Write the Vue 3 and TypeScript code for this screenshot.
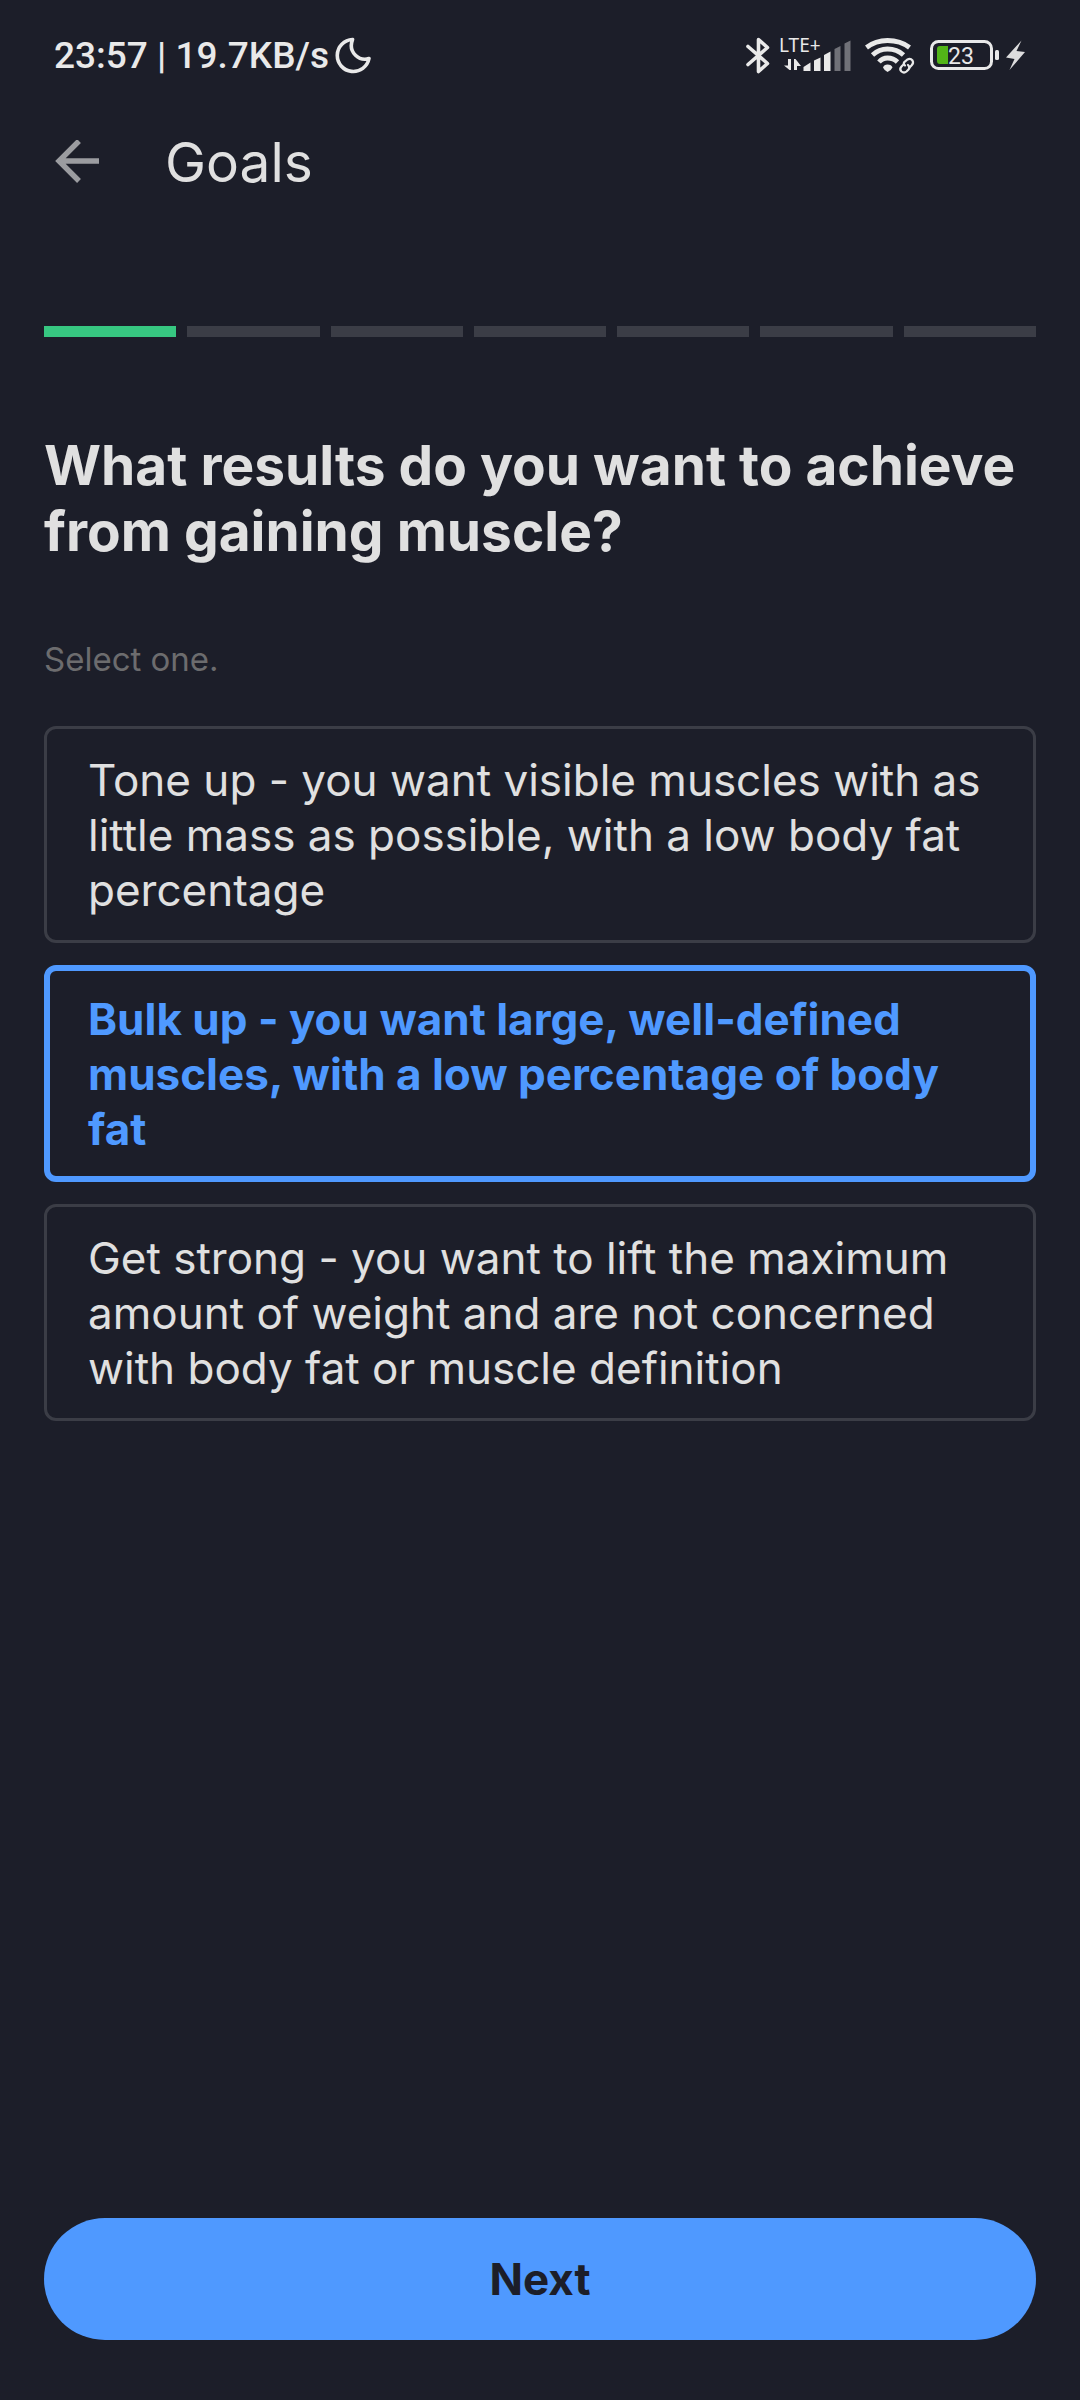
<script setup lang="ts">
import { ref } from 'vue'

interface Goal {
  id: string
  label: string
}

const goals: Goal[] = [
  { id: 'tone', label: 'Tone up - you want visible muscles with as little mass as possible, with a low body fat percentage' },
  { id: 'bulk', label: 'Bulk up - you want large, well-defined muscles, with a low percentage of body fat' },
  { id: 'strong', label: 'Get strong - you want to lift the maximum amount of weight and are not concerned with body fat or muscle definition' },
]

const stepCount = 7
const step = ref(1)
const selected = ref('bulk')
</script>

<template>
  <div class="screen">
    <div class="status">
      <div class="status-group">
        <span class="clock">23:57 | 19.7KB/s</span>
        <svg class="moon" width="36" height="40" viewBox="0 0 36 40" aria-hidden="true">
          <path d="M17.500 3.500A16 16 0 1 0 34 22.500C25 25.500 12.500 17 17.500 3.500Z" fill="none" stroke="#e9e9e9" stroke-width="3.600" stroke-linejoin="round" />
        </svg>
      </div>
      <div class="status-group icons">
        <svg width="28" height="40" viewBox="0 0 28 40" aria-hidden="true">
          <path d="M4 10.500L23.500 27.500L14.500 35.500V3.500L23.500 11.500L4 28.500" fill="none" stroke="#e9e9e9" stroke-width="3.600" stroke-linejoin="round" stroke-linecap="round" />
        </svg>
        <svg width="78" height="56" viewBox="-2 -8 78 56" aria-hidden="true">
          <text x="-1" y="16" class="network">LTE+</text>
          <g fill="#e9e9e9">
            <path d="M8 23h3v11H9.500L4 29.500h4ZM14 34h3V30h4L15.500 23H14Z" />
            <path d="M23.500 31L30.500 26.500V35h-7ZM34 24.500L40.500 21.500V35H34ZM44 19L50.500 15.500V35H44Z" />
          </g>
          <path d="M54.500 13L60.500 10V35h-6ZM64.500 7.500L70.500 4.500V35h-6Z" fill="#707178" />
        </svg>
        <svg width="60" height="40" viewBox="0 0 60 40" aria-hidden="true">
          <g fill="none" stroke="#e9e9e9" stroke-width="4.800">
            <path d="M4.500 11.500Q13.500 4.500 25.500 4.500Q38.500 4.500 47.500 11.500" />
            <path d="M10.500 19Q17 13 25.500 13Q35 13 41.500 19" />
            <path d="M17 26Q20.500 22 25.500 22Q31.500 22 35.500 26" />
          </g>
          <path d="M25.500 28.500Q29.500 28.500 30.500 31.500Q29.500 34 25.500 36Q22 34 21 31.500Q22 28.500 25.500 28.500Z" fill="#e9e9e9" />
          <g fill="none" stroke="#e9e9e9" stroke-width="2.200" stroke-linecap="round">
            <path d="M43 29.500Q40.500 27 43 25.500L45.500 23.500Q48.500 22 50.500 24.500Q52 27 49.500 29.500L47.500 31.500" />
            <path d="M42 28L39.500 30.500Q37 33 39.500 35.500Q42 37.500 44.500 35.500L46.500 33.500Q48.500 31 46 29" />
          </g>
        </svg>
        <svg width="72" height="40" viewBox="0 0 72 40" aria-hidden="true">
          <rect x="3.500" y="5.500" width="60" height="27" rx="7" fill="none" stroke="#e9e9e9" stroke-width="3" />
          <path d="M20 10V28H12Q9 28 9 25V13Q9 10 12 10Z" fill="#52b518" />
          <rect x="67" y="14" width="4" height="10" rx="1.500" fill="#e9e9e9" />
          <text x="20" y="28" class="charge">23</text>
        </svg>
        <svg width="20" height="40" viewBox="0 0 20 40" aria-hidden="true">
          <path d="M15.500 4.500L0 21.500L8.500 23L3.500 34L19 16L10.500 15Z" fill="#dcdcdd" />
        </svg>
      </div>
    </div>

    <header class="app-bar">
      <button class="back" type="button" aria-label="Back">
        <svg width="44" height="44" viewBox="0 0 44 44" aria-hidden="true">
          <path d="M44 21H5M24 1L4 21L24 41" fill="none" stroke="#9b9ca0" stroke-width="5.400" />
        </svg>
      </button>
      <h1 class="title">Goals</h1>
    </header>

    <main class="content">
      <ol class="steps" :aria-label="`Step ${step} of ${stepCount}`">
        <li v-for="n in stepCount" :key="n" class="step" :class="{ done: n <= step }"></li>
      </ol>

      <h2 id="question" class="question">What results do you want to achieve from gaining muscle?</h2>
      <p class="hint">Select one.</p>

      <div class="options" role="radiogroup" aria-labelledby="question">
        <label v-for="goal in goals" :key="goal.id" class="option" :class="{ selected: selected === goal.id }" :for="goal.id">
          <input :id="goal.id" v-model="selected" class="radio" type="radio" name="goal" :value="goal.id" />
          {{ goal.label }}
        </label>
      </div>
    </main>

    <footer class="footer">
      <button class="next" type="button">Next</button>
    </footer>
  </div>
</template>

<style>
body {
  margin: 0;
  background: #1c1e29;
}
</style>

<style scoped>
.screen {
  display: flex;
  flex-direction: column;
  min-height: 100vh;
  box-sizing: border-box;
  background: #1c1e29;
  color: #e0e0e0;
  font-family: Inter, "Liberation Sans", sans-serif;
  font-optical-sizing: none;
}

.status {
  display: flex;
  align-items: center;
  justify-content: space-between;
  height: 112px;
  padding: 0 54px;
  font-family: Roboto, sans-serif;
}

.status-group {
  display: flex;
  align-items: center;
  gap: 6px;
}

.icons {
  gap: 6px;
}

.clock {
  color: #e9e9e9;
  font-size: 37px;
  font-weight: 500;
  line-height: 44px;
}

.network {
  fill: #e9e9e9;
  font-family: "Noto Sans", sans-serif;
  font-size: 19px;
}

.charge {
  fill: #e9e9e9;
  font-size: 23px;
}

.app-bar {
  display: flex;
  align-items: center;
  gap: 66px;
  height: 100px;
  padding: 0 55px;
}

.back {
  display: flex;
  padding: 0;
  border: 0;
  background: none;
}

.title {
  margin: 0;
  font-size: 55px;
  font-weight: 400;
  line-height: 66px;
}

.content {
  flex: 1;
  padding: 114px 44px 44px;
}

.steps {
  display: flex;
  gap: 11px;
  margin: 0;
  padding: 0;
  list-style: none;
}

.step {
  flex: 1;
  height: 11px;
  background: #3b3d46;
}

.step.done {
  background: #37c781;
}

.question {
  margin: 95px 0 0;
  font-size: 55px;
  font-weight: 700;
  line-height: 66px;
}

.hint {
  margin: 75px 0 0;
  color: #6c6c6e;
  font-size: 33px;
  line-height: 40px;
}

.options {
  display: flex;
  flex-direction: column;
  gap: 22px;
  margin-top: 47px;
}

.option {
  position: relative;
  padding: 24px 41px 22px;
  border: 3px solid #3b3d46;
  border-radius: 12px;
  font-size: 44px;
  line-height: 55px;
}

.option.selected {
  padding: 21px 38px 19px;
  border: 6px solid #4f99ff;
  color: #4f99ff;
  font-weight: 700;
}

.radio {
  position: absolute;
  inset: 0;
  width: 100%;
  height: 100%;
  margin: 0;
  opacity: 0;
}

.footer {
  padding: 0 44px 60px;
}

.next {
  width: 100%;
  height: 122px;
  border: 0;
  border-radius: 61px;
  background: #4f99ff;
  color: #1c1e29;
  font: inherit;
  font-size: 44px;
  font-weight: 700;
}
</style>
